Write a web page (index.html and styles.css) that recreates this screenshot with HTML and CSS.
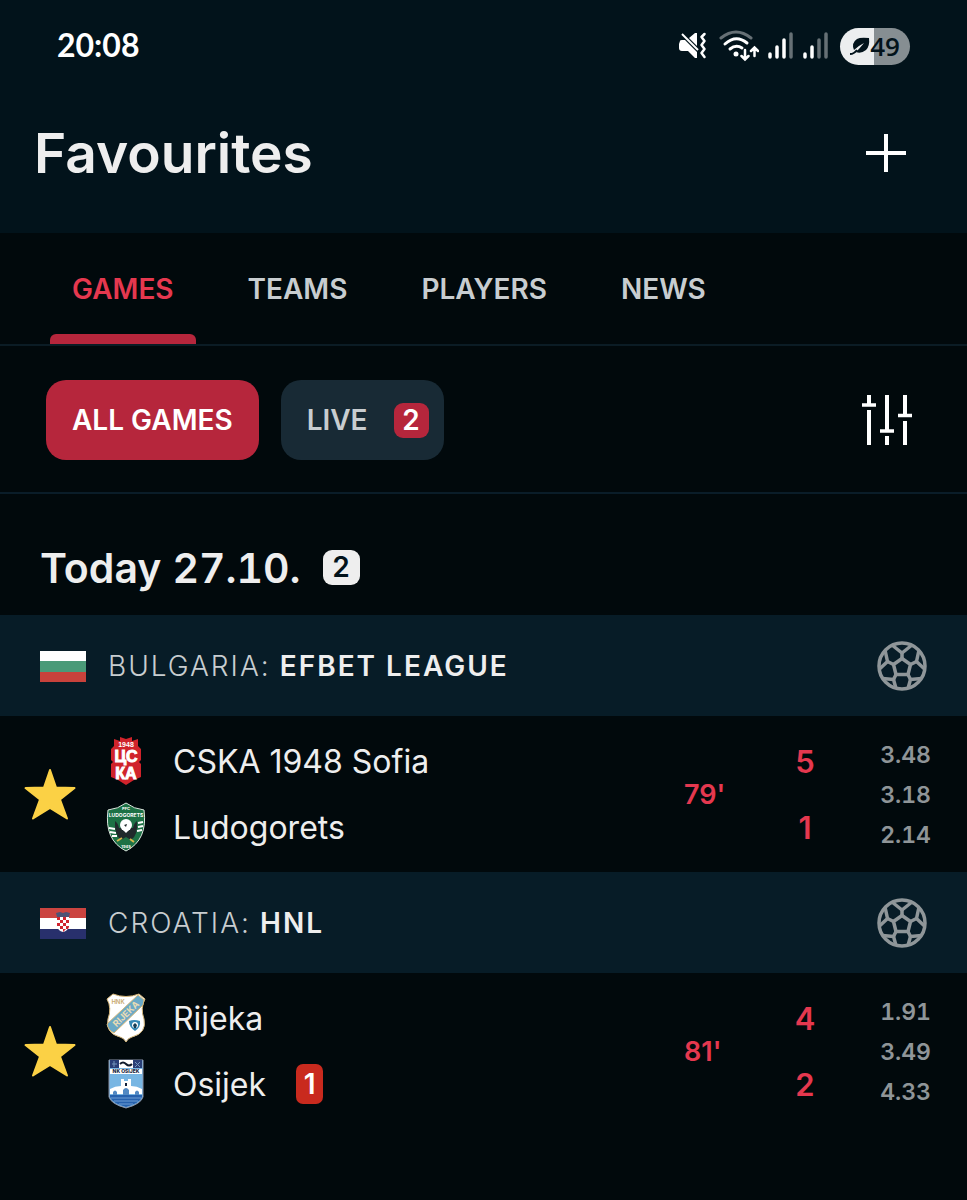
FILE: index.html
```html
<!DOCTYPE html>
<html lang="en">
<head>
    <meta charset="UTF-8">
    <meta name="viewport" content="width=device-width, initial-scale=1.0">
    <title>Favourites</title>
    <link rel="stylesheet" href="styles.css">
</head>
<body>
    <!-- shared shapes -->
    <svg class="defs" aria-hidden="true">
        <symbol id="star" viewBox="0 0 52 52">
            <path d="M26 2 L32 19.500 L50.500 20 L36 31.500 L43 50.500 L26 40 L9 50.500 L16 31.500 L1.500 20 L20 19.500 Z" fill="#fbd145" stroke="#fbd145" stroke-width="2" stroke-linejoin="round"/>
        </symbol>
        <symbol id="ball" viewBox="0 0 50 50">
            <g fill="none" stroke="#8f9699" stroke-width="3.500" stroke-linejoin="round">
                <circle cx="25" cy="25" r="23"/>
                <path d="M25 17.500 L33.500 23.500 L31 33.500 H19 L16.500 23.500 Z"/>
                <path d="M25 17.500 V12 M33.500 23.500 L39.500 20.500 M31 33.500 L33.500 38.500 M19 33.500 L16.500 38.500 M16.500 23.500 L10.500 20.500"/>
                <path d="M15 4 L25 12 L35 4"/>
                <path d="M42 9 L39.500 20.500 L47.500 28"/>
                <path d="M8 9 L10.500 20.500 L2.500 28"/>
                <path d="M44.500 37.500 L33.500 38.500 L31 47.500"/>
                <path d="M5.500 37.500 L16.500 38.500 L19 47.500"/>
            </g>
        </symbol>
    </svg>

    <header class="header">
        <div class="status">
            <span class="time">20:08</span>
            <div class="icons">
                <svg width="28" height="28" viewBox="0 0 28 28">
                    <path d="M1 9 Q1 8 3 8 H6 L18 20 V26 L16 26 L9 19 H3 Q0 19 0 16 V12 Z M10 6 L16 1 H18 V14 Z" fill="#fff"/>
                    <path d="M3 2 L19 18" stroke="#fff" stroke-width="2"/>
                    <path d="M25.500 2 L22.500 5 L25.500 9 L22.500 13 L25.500 17 L22.500 21 L25.500 25" fill="none" stroke="#fff" stroke-width="2.500" stroke-linecap="round" stroke-linejoin="round"/>
                </svg>
                <svg class="wifi" width="40" height="32" viewBox="0 0 40 32">
                    <g fill="none" stroke="#fff" stroke-width="3" stroke-linecap="round">
                        <path d="M2 8 Q17 -4 32 8" stroke="#667075"/>
                        <path d="M6 14 Q17 4 28 13"/>
                        <path d="M11 19 Q17 14 23 18"/>
                        <path d="M26 20 V29 M22.500 26 L26 29.500 L29.500 26 M35.500 26 V18 M32 21 L35.500 17.500 L39 21" stroke-width="2.500"/>
                    </g>
                    <circle cx="17" cy="24" r="2.500" fill="#fff"/>
                </svg>
                <svg class="signal" width="26" height="28" viewBox="0 0 26 28">
                    <g stroke="#fff" stroke-width="3.500" stroke-linecap="round">
                        <path d="M2 22 V25"/><path d="M9 15 V25"/><path d="M16 8 V25"/>
                        <path d="M23 2 V25" stroke="#667075"/>
                    </g>
                </svg>
                <svg class="signal" width="26" height="28" viewBox="0 0 26 28">
                    <g stroke="#fff" stroke-width="3.500" stroke-linecap="round">
                        <path d="M2 22 V25"/><path d="M9 15 V25"/>
                        <path d="M16 8 V25" stroke="#667075"/><path d="M23 2 V25" stroke="#667075"/>
                    </g>
                </svg>
                <div class="battery">
                    <svg width="20" height="18" viewBox="0 0 20 18">
                        <path d="M4 13 Q1 6 7 2 Q10 0 19 1 Q20 9 16 13 Q11 17 6 15 Q10 11 14 6 Q8 9 4 13 Z" fill="#02131b"/>
                        <path d="M0 17 Q4 17 7 13" fill="none" stroke="#02131b" stroke-width="2"/>
                    </svg>
                    <span>49</span>
                </div>
            </div>
        </div>
        <div class="title">
            <h1>Favourites</h1>
            <button class="plus" aria-label="Add">
                <svg width="42" height="40" viewBox="0 0 42 40"><path d="M21 1 V39 M1 20 H41" stroke="#fff" stroke-width="4"/></svg>
            </button>
        </div>
    </header>

    <nav class="tabs">
        <a href="#" class="on">GAMES</a>
        <a href="#">TEAMS</a>
        <a href="#">PLAYERS</a>
        <a href="#">NEWS</a>
    </nav>

    <div class="filter">
        <button class="chip all">ALL GAMES</button>
        <button class="chip live">LIVE <span class="num">2</span></button>
        <button class="sort" aria-label="Sort">
            <svg width="52" height="52" viewBox="0 0 52 52">
                <path d="M8 1 V11 M8 16 V51 M26 1 V37 M26 42 V51 M44 1 V21 M44 27 V51" stroke="#fff" stroke-width="4"/>
                <path d="M1 11 H15 M19 37 H33 M37 21.500 H51" stroke="#fff" stroke-width="3.500"/>
            </svg>
        </button>
    </div>

    <main>
        <h2 class="today">Today 27.10. <span class="count">2</span></h2>

        <section>
            <div class="league">
                <svg class="flag" width="46" height="31" viewBox="0 0 46 31">
                    <path d="M0 0 H46 V31 H0 Z" fill="#fff"/>
                    <path d="M0 10 H46 V21 H0 Z" fill="#4a9a78"/>
                    <path d="M0 21 H46 V31 H0 Z" fill="#c8423b"/>
                </svg>
                <h3><span>BULGARIA:</span> EFBET LEAGUE</h3>
                <svg class="ball" width="50" height="50"><use href="#ball"/></svg>
            </div>
            <div class="match">
                <button class="fav" aria-label="Remove from favourites"><svg width="52" height="52"><use href="#star"/></svg></button>
                <div class="teams">
                    <div class="team">
                        <svg width="40" height="50" viewBox="0 0 40 50">
                            <path d="M8 3 L14 5 V1 L20 3 L26 1 V5 L32 3 V10 L35 13 V24 L33 26 L35 28 V41 L28 44 L20 49 L12 44 L5 41 V28 L7 26 L5 24 V13 L8 10 Z" fill="#d0232b"/>
                            <g fill="#fff" font-family="Liberation Sans, sans-serif" font-weight="700" text-anchor="middle">
                                <text x="20" y="11" font-size="7">1948</text>
                                <text x="20" y="26" font-size="16" stroke="#fff" stroke-width="1">ЦС</text>
                                <text x="20" y="43" font-size="16" stroke="#fff" stroke-width="1">КА</text>
                            </g>
                        </svg>
                        <span>CSKA 1948 Sofia</span>
                    </div>
                    <div class="team">
                        <svg width="40" height="50" viewBox="0 0 40 50">
                            <path d="M20 1 Q28 7 38 8 Q42 38 20 49 Q-2 38 2 8 Q12 7 20 1 Z" fill="#1d7145" stroke="#dce8df" stroke-width="1"/>
                            <path d="M3 26 L9 27 M4 30 L10 31 M6 34 L11 34 M37 20 L32 21 M37 24 L32 25 M36 28 L31 29" stroke="#fff" stroke-width="2"/>
                            <path d="M9 19 Q12 21 13 26 L27 26 Q28 21 31 19 Q32 34 25 38 L20 35 L15 38 Q8 32 9 19 Z" fill="#20292b"/>
                            <circle cx="20" cy="23" r="6" fill="#fff"/>
                            <path d="M16 27 L20 31 L24 27 Z" fill="#fff"/>
                            <path d="M18 23 L21 22 L20 25 Z" fill="#20292b"/>
                            <path d="M11 39 L16 36 M24 37 L28 40" stroke="#d7b54a" stroke-width="2"/>
                            <g fill="#fff" font-family="Inter, sans-serif" font-weight="700" text-anchor="middle">
                                <text x="20" y="8" font-size="4">PFC</text>
                                <text x="20" y="15" font-size="5">LUDOGORETS</text>
                                <text x="20" y="46" font-size="4">1945</text>
                            </g>
                        </svg>
                        <span>Ludogorets</span>
                    </div>
                </div>
                <div class="minute">79'</div>
                <div class="score"><span>5</span><span>1</span></div>
                <div class="odds"><span>3.48</span><span>3.18</span><span>2.14</span></div>
            </div>
        </section>

        <section>
            <div class="league">
                <svg class="flag" width="46" height="31" viewBox="0 0 46 31">
                    <path d="M0 0 H46 V31 H0 Z" fill="#fff"/>
                    <path d="M0 0 H46 V10 H0 Z" fill="#cb4440"/>
                    <path d="M0 21 H46 V31 H0 Z" fill="#28306c"/>
                    <path d="M16 5 L20 4 L23 5 L26 4 L30 5 L29 9 H17 Z" fill="#4c5375"/>
                    <path d="M17 9 H29 V18 Q28 23 23 24 Q18 23 17 18 Z" fill="#fff"/>
                    <path d="M17 9 h3 v3 h-3z M23 9 h3 v3 h-3z M20 12 h3 v3 h-3z M26 12 h3 v3 h-3z M17 15 h3 v3 h-3z M23 15 h3 v3 h-3z M20 18 h3 v3 h-3z M26 18 h3 v1 l-1 2 h-2z M23 21 h3 l-3 3z" fill="#d0242e"/>
                </svg>
                <h3><span>CROATIA:</span> HNL</h3>
                <svg class="ball" width="50" height="50"><use href="#ball"/></svg>
            </div>
            <div class="match">
                <button class="fav" aria-label="Remove from favourites"><svg width="52" height="52"><use href="#star"/></svg></button>
                <div class="teams">
                    <div class="team">
                        <svg width="40" height="50" viewBox="0 0 40 50">
                            <path d="M7 1 Q20 6 33 1 L39 6 Q34 15 38 26 Q41 40 26 44 Q22 45 20 49 Q18 45 14 44 Q-1 40 2 26 Q6 15 1 6 Z" fill="#fff" stroke="#d5b679" stroke-width="1"/>
                            <path d="M32 2 L38 7 L37 12 L8 40 Q2 37 1 31 Z" fill="#6aa9c6" stroke="#d5b679" stroke-width="1"/>
                            <text transform="translate(20 21) rotate(-44)" y="3" font-family="Inter, sans-serif" font-size="9" font-weight="700" text-anchor="middle" fill="#e9dcb5">RIJEKA</text>
                            <text x="12" y="11" font-family="Inter, sans-serif" font-size="6" font-weight="600" text-anchor="middle" fill="#c8a96d">HNK</text>
                            <path d="M23 28 Q28 26 34 28 Q35 34 29 38 Q23 34 23 28 Z" fill="#3688b4"/>
                            <circle cx="29" cy="32" r="3" fill="#fff"/>
                            <path d="M27 32 L29 30 L31 32 L30 35 H28 Z" fill="#183e55"/>
                        </svg>
                        <span>Rijeka</span>
                    </div>
                    <div class="team">
                        <svg width="40" height="50" viewBox="0 0 40 50">
                            <path d="M3 1 H37 V38 Q35 45 20 49 Q5 45 3 38 Z" fill="#78b6e3" stroke="#8b93a8" stroke-width="1"/>
                            <path d="M4 1 H13 V9 H4 Z M27 1 H36 V9 H27 Z" fill="#293f77"/>
                            <path d="M13 1 H27 V9 H13 Z M4 10 H36 V15 H4 Z" fill="#fff"/>
                            <path d="M6 5 H11 M8 2 V8 M29 3 L34 8 M34 3 L29 8" stroke="#7596bd" stroke-width="1"/>
                            <path d="M14 5 Q17 2 20 5 T26 5" fill="none" stroke="#111b2c" stroke-width="2"/>
                            <text x="20" y="14" font-family="Inter, sans-serif" font-size="5" font-weight="800" text-anchor="middle" fill="#14213b">NK OSIJEK</text>
                            <path d="M4 30 Q9 27 15 27 V20 H18 V22 H22 V20 H25 V27 Q31 27 36 30 V35 H4 Z" fill="#fff"/>
                            <path d="M7 36 V33 Q9 30 11 33 V36 Z M17 36 V31 Q20 27 23 31 V36 Z M29 36 V33 Q31 30 33 33 V36 Z" fill="#5289c3"/>
                            <path d="M19 24 H21 V27 H19 Z" fill="#14213b"/>
                            <path d="M4 36 H36 V38 Q34 44 20 48 Q6 44 4 38 Z" fill="#2762ae"/>
                            <path d="M5 39 H35 M8 42 H32 M13 45 H27" stroke="#6f9dd4" stroke-width="1"/>
                        </svg>
                        <span>Osijek</span>
                        <span class="redcard">1</span>
                    </div>
                </div>
                <div class="minute">81'</div>
                <div class="score"><span>4</span><span>2</span></div>
                <div class="odds"><span>1.91</span><span>3.49</span><span>4.33</span></div>
            </div>
        </section>
    </main>
</body>
</html>
```
FILE: styles.css
```css
*{
    margin: 0;
    padding: 0;
    box-sizing: border-box;
}
body{
    background-color: #01090c;
    color: #eeeeee;
    font-family: Inter, "Liberation Sans", sans-serif;
}
button{
    border: none;
    background: none;
    color: inherit;
    font: inherit;
    cursor: pointer;
}
svg{
    display: block;
    flex: none;
}
.defs{
    position: absolute;
    width: 0;
    height: 0;
}

/* header */
.header{
    background-color: #02131b;
    padding-bottom: 40px;
}
.status{
    display: flex;
    justify-content: space-between;
    align-items: center;
    height: 92px;
    padding: 0 57px;
}
.time{
    padding-bottom: 4px;
    color: #fff;
    font-family: Lato, sans-serif;
    font-size: 32px;
    font-weight: 700;
}
.icons{
    display: flex;
    align-items: center;
}
.wifi{
    margin-left: 12px;
}
.signal{
    margin-left: 9px;
}
.battery{
    display: flex;
    align-items: center;
    justify-content: center;
    width: 70px;
    height: 37px;
    margin-left: 11px;
    border-radius: 19px;
    background: linear-gradient(90deg, #eceeef 49%, #868e92 49%);
    color: #02131b;
    font-family: "Open Sans", sans-serif;
    font-size: 26px;
    font-weight: 600;
}
.title{
    display: flex;
    justify-content: space-between;
    align-items: center;
    height: 101px;
    padding: 20px 60px 0 34px;
}
h1{
    font-size: 55px;
    font-weight: 600;
}

/* tabs */
.tabs{
    display: flex;
    gap: 30px;
    padding-left: 50px;
    border-bottom: 2px solid #0b1c25;
}
.tabs a{
    position: relative;
    height: 111px;
    padding: 0 22px;
    color: #c8cdd0;
    font-size: 28px;
    font-weight: 600;
    line-height: 113px;
    text-decoration: none;
}
.tabs .on{
    color: #e5384f;
}
.tabs .on::after{
    content: "";
    position: absolute;
    left: 0;
    right: 0;
    bottom: 0;
    height: 10px;
    border-radius: 6px 6px 0 0;
    background-color: #b6263c;
}

/* filter */
.filter{
    display: flex;
    align-items: center;
    gap: 22px;
    height: 148px;
    padding: 2px 54px 0 46px;
    border-bottom: 2px solid #0a1d29;
}
.chip{
    display: flex;
    align-items: center;
    height: 80px;
    border-radius: 20px;
    font-size: 28px;
    font-weight: 600;
}
.all{
    padding: 0 26px;
    background-color: #b6263c;
    color: #fff;
}
.live{
    gap: 26px;
    padding: 0 15px 0 26px;
    background-color: #182a35;
    color: #c8cdd0;
}
.num{
    width: 35px;
    border-radius: 9px;
    background-color: #b6263c;
    color: #fff;
    line-height: 35px;
}
.sort{
    margin-left: auto;
}

/* games */
.today{
    display: flex;
    align-items: center;
    gap: 22px;
    height: 121px;
    padding: 26px 40px 0;
    font-size: 41px;
    font-weight: 600;
    font-variant-numeric: tabular-nums;
}
.count{
    width: 37px;
    border-radius: 9px;
    background-color: #eeeeee;
    color: #02131b;
    font-size: 28px;
    line-height: 35px;
    text-align: center;
}
.league{
    display: flex;
    align-items: center;
    gap: 22px;
    height: 101px;
    padding: 1px 40px 0;
    background-color: #071c27;
}
h3{
    font-size: 28px;
    font-weight: 600;
    letter-spacing: 2px;
}
h3 span{
    color: #c8cdd0;
    font-weight: 300;
}
.ball{
    margin-left: auto;
}
.match{
    display: flex;
    align-items: center;
    height: 156px;
    padding: 0 36px 0 24px;
}
.fav{
    width: 82px;
}
.teams{
    flex: 1;
}
.team{
    display: flex;
    align-items: center;
    gap: 27px;
    height: 66px;
    font-size: 32px;
}
.redcard{
    width: 27px;
    margin-left: 3px;
    border-radius: 7px;
    background-color: #c92a1e;
    color: #fff;
    font-size: 28px;
    font-weight: 600;
    line-height: 40px;
    text-align: center;
}
.minute,
.score{
    color: #e5384f;
    font-weight: 600;
}
.minute{
    width: 102px;
    font-size: 27px;
}
.score{
    width: 38px;
    padding-top: 2px;
    font-size: 31px;
    line-height: 66px;
    text-align: center;
}
.score span,
.odds span{
    display: block;
}
.odds{
    width: 107px;
    padding-top: 2px;
    color: #8f9598;
    font-size: 23px;
    font-weight: 600;
    font-variant-numeric: tabular-nums;
    line-height: 40px;
    text-align: right;
}
```
